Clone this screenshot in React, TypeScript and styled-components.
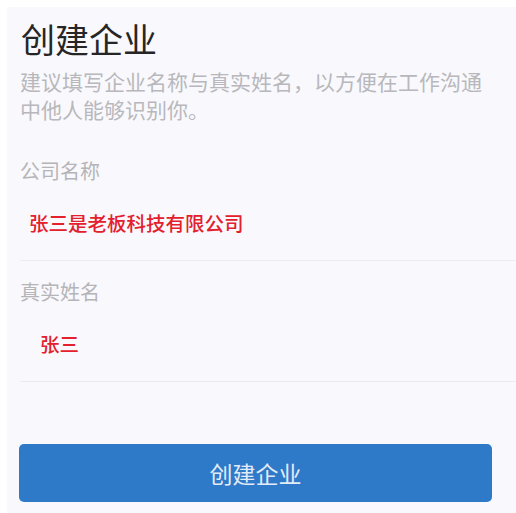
import React from "react";
import styled, { createGlobalStyle } from "styled-components";

const Global = createGlobalStyle`
  html, body { margin: 0; padding: 0; background: #ffffff; }
  body { font-family: "Noto Sans CJK SC", "Noto Sans", sans-serif; }
`;

const Page = styled.div`
  width: 516px;
  height: 513px;
  box-sizing: border-box;
  padding: 7px 0 0 7px;
  background: #ffffff;
`;

const Panel = styled.div`
  height: 100%;
  box-sizing: border-box;
  background: #f9f8fc;
  padding: 0 0 0 13px;
  display: flex;
  flex-direction: column;
`;

const Title = styled.h1`
  margin: 12px 0 0 1px;
  font-size: 34px;
  line-height: 40px;
  font-weight: 400;
  color: #262626;
`;

const Hint = styled.p`
  margin: 8px 0 17px 0;
  padding-right: 30px;
  font-size: 21px;
  line-height: 28px;
  color: #b8b8bc;
`;

const Field = styled.div<{ $indent: number }>`
  display: flex;
  flex-direction: column;
  border-bottom: 1px solid #ececf0;
  & > span:last-child {
    padding-left: ${(p) => p.$indent}px;
  }
`;

const Label = styled.span`
  margin-top: 17px;
  font-size: 20px;
  line-height: 28px;
  color: #b5b5b8;
`;

const Value = styled.span`
  margin: 24px 0 23px 0;
  font-size: 19.5px;
  line-height: 28px;
  font-weight: 500;
  color: #e3202c;
`;

const Button = styled.button`
  margin: 62px 24px 0 -1px;
  height: 58px;
  border: none;
  border-radius: 5px;
  background: #2f79c9;
  color: #e2ecf7;
  font-family: "Noto Sans CJK SC", sans-serif;
  font-size: 23px;
  cursor: pointer;
`;

export default function App() {
  return (
    <Page>
      <Global />
      <Panel>
        <Title>创建企业</Title>
        <Hint>建议填写企业名称与真实姓名，以方便在工作沟通中他人能够识别你。</Hint>
        <Field $indent={9}>
          <Label>公司名称</Label>
          <Value>张三是老板科技有限公司</Value>
        </Field>
        <Field $indent={20}>
          <Label>真实姓名</Label>
          <Value>张三</Value>
        </Field>
        <Button>创建企业</Button>
      </Panel>
    </Page>
  );
}
